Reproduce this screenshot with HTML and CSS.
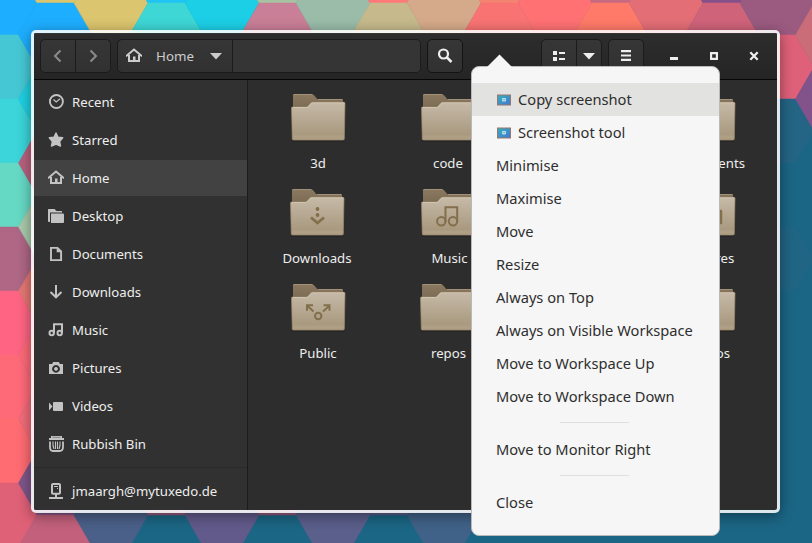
FILE: index.html
```html
<!DOCTYPE html>
<html lang="en">
<head>
<meta charset="utf-8">
<title>Home</title>
<link rel="stylesheet" href="styles.css">
</head>
<body>
<svg class="wallpaper" width="812" height="543" aria-hidden="true">
  <defs>
    <polygon id="hex" points="-18.5,0 18.5,0 37,32 18.5,64 -18.5,64 -37,32" fill="currentColor" stroke="currentColor" stroke-width=".5"/>
    <linearGradient id="front" x1="0" y1="0" x2="0" y2="1"><stop offset="0" stop-color="#c6baa8"/><stop offset=".85" stop-color="#a9997f"/><stop offset=".92" stop-color="#b0a085"/><stop offset="1" stop-color="#ab9b80"/></linearGradient>
    <linearGradient id="back" x1="0" y1="0" x2="0" y2="1"><stop offset="0" stop-color="#8a795f"/><stop offset="1" stop-color="#776650"/></linearGradient>
    <linearGradient id="screen" x1="0" y1="0" x2="1" y2="1"><stop offset="0" stop-color="#35aebb"/><stop offset="1" stop-color="#4678d0"/></linearGradient>
    <symbol id="folder" viewBox="0 0 56 50">
      <path d="M2 20V1.5Q2 .5 3 .5H21Q22.5 .5 23.3 1.6L26 4.8Q26.5 5.3 27.5 5.3H51Q52 5.3 52 6.3V20z" fill="url(#back)"/>
      <path d="M2.3 1.2Q2.5 .5 3 .5H21.5M27 5.5H51.5" fill="none" stroke="#a19177"/>
      <path d="M1 47.2H53" stroke="#191919" opacity=".55"/>
      <path d="M.5 14Q.5 13 1.500 13H15Q16.300 13 17.200 12L19.500 9.300Q20.400 8.300 22 8.300H53Q54 8.300 54 9.300L53.300 45Q53.200 46 52 46H2.500Q1.400 46 1.300 45z" fill="url(#front)" stroke="#9d8b6d" stroke-width=".7"/>
      <path d="M1.500 13.500H15.500Q16.800 13.500 17.600 12.500L19.800 9.800Q20.600 8.800 22 8.800H53" fill="none" stroke="#d6cbb9" stroke-width=".8"/>
    </symbol>
    <symbol id="home" viewBox="0 0 16 16"><path d="M0 8.200 8 1.600 16 8.200" fill="none" stroke="currentColor" stroke-width="2"/><path d="M3 7V13H13V7" fill="none" stroke="currentColor" stroke-width="2"/><path d="M7 8.500H9.500V14H7z" fill="currentColor"/></symbol>
    <symbol id="shot" viewBox="0 0 14 12"><path d="M0 .5H14V11.500H0z" fill="#96776f"/><path d="M1 1.500H13V10.500H1z" fill="url(#screen)"/><rect x="5" y="4" width="4" height="3.400" rx=".8" fill="#bcdfed"/><rect x="6.400" y="5" width="1.300" height="1.300" fill="#5aa5c8"/></symbol>
    <symbol id="notes" viewBox="0 0 16 16"><path d="M6 11V2.200H14V11" fill="none" stroke="currentColor" stroke-width="2"/><circle cx="3.700" cy="11" r="2.200" fill="none" stroke="currentColor" stroke-width="2"/><circle cx="11.700" cy="11" r="2.200" fill="none" stroke="currentColor" stroke-width="2"/></symbol>
  </defs>
  <rect width="812" height="543" fill="#1b6685"/>
  <use href="#hex" x="0" y="-29" color="#1eaeff"/><use href="#hex" x="0" y="35" color="#45c8d4"/><use href="#hex" x="0" y="99" color="#3bd5da"/><use href="#hex" x="0" y="163" color="#66d9c5"/><use href="#hex" x="0" y="227" color="#af6785"/><use href="#hex" x="0" y="291" color="#ff6583"/><use href="#hex" x="0" y="355" color="#ff6a79"/><use href="#hex" x="0" y="419" color="#ff6c72"/><use href="#hex" x="0" y="483" color="#df6178"/>
  <use href="#hex" x="55.500" y="-61" color="#dcc56f"/><use href="#hex" x="55.500" y="3" color="#1eaeff"/><use href="#hex" x="55.500" y="67" color="#1fd0e4"/><use href="#hex" x="55.500" y="131" color="#b8627e"/><use href="#hex" x="55.500" y="195" color="#aacbac"/><use href="#hex" x="55.500" y="259" color="#e57873"/><use href="#hex" x="55.500" y="323" color="#ff6a79"/><use href="#hex" x="55.500" y="387" color="#f36c79"/><use href="#hex" x="55.500" y="451" color="#7f5689"/><use href="#hex" x="55.500" y="515" color="#c3617c"/>
  <use href="#hex" x="111" y="-29" color="#dcc56f"/><use href="#hex" x="166.500" y="-61" color="#20c4f4"/><use href="#hex" x="166.500" y="3" color="#3ed7d5"/><use href="#hex" x="222" y="-29" color="#1ccfe6"/><use href="#hex" x="277.500" y="-61" color="#a7c3a1"/><use href="#hex" x="277.500" y="3" color="#c97f97"/><use href="#hex" x="333" y="-29" color="#9abca9"/><use href="#hex" x="388.500" y="-61" color="#ff7979"/><use href="#hex" x="388.500" y="3" color="#c6ba8c"/><use href="#hex" x="444" y="-29" color="#d5aa8a"/><use href="#hex" x="499.500" y="-61" color="#f58371"/><use href="#hex" x="499.500" y="3" color="#f97373"/><use href="#hex" x="555" y="-29" color="#ff7173"/><use href="#hex" x="610.500" y="-61" color="#c76a80"/><use href="#hex" x="610.500" y="3" color="#ff7a69"/><use href="#hex" x="666" y="-29" color="#e36e76"/><use href="#hex" x="721.500" y="-61" color="#865088"/><use href="#hex" x="721.500" y="3" color="#cf637a"/><use href="#hex" x="777" y="-29" color="#9b5b81"/><use href="#hex" x="777" y="35" color="#df6179"/><use href="#hex" x="777" y="99" color="#246585"/><use href="#hex" x="777" y="227" color="#216585"/><use href="#hex" x="832.500" y="3" color="#cb6d78"/><use href="#hex" x="832.500" y="67" color="#81538a"/>
  <use href="#hex" x="111" y="483" color="#4b6089"/><use href="#hex" x="166.500" y="451" color="#96597f"/><use href="#hex" x="222" y="483" color="#625a8b"/><use href="#hex" x="277.500" y="451" color="#96597f"/><use href="#hex" x="333" y="483" color="#5a5f8b"/><use href="#hex" x="388.500" y="451" color="#5a5f8b"/><use href="#hex" x="444" y="483" color="#416288"/>
</svg>

<div class="window">
  <header class="titlebar">
    <div class="group nav">
      <span><svg width="16" height="16"><path d="M10.500 2.500 5 8l5.500 5.500" fill="none" stroke="#8b8b8b" stroke-width="2"/></svg></span>
      <span><svg width="16" height="16"><path d="M5.500 2.500 11 8l-5.500 5.500" fill="none" stroke="#8b8b8b" stroke-width="2"/></svg></span>
    </div>
    <div class="group path">
      <span class="crumb"><svg width="16" height="16"><use href="#home"/></svg><b>Home</b><svg width="12" height="7"><path d="M0 0H12L6 6.500z" fill="currentColor"/></svg></span>
      <span class="rest"></span>
    </div>
    <div class="group search"><span><svg width="16" height="16"><circle cx="6.500" cy="6" r="4.500" fill="none" stroke="#eee" stroke-width="2.200"/><path d="M9.500 9 14.500 14" stroke="#eee" stroke-width="2.500"/></svg></span></div>
    <div class="group view">
      <span><svg width="12" height="12"><path d="M0 1h4v4H0zM0 7h4v4H0zM6 2h6v2H6zM6 8h6v2H6z" fill="#eee"/></svg></span>
      <span class="narrow"><svg width="12" height="7"><path d="M0 0H12L6 6.500z" fill="#eee"/></svg></span>
    </div>
    <div class="group burger"><span><svg width="10" height="12"><path d="M0 0h10v2.200H0zM0 4.400h10v2.200H0zM0 8.800h10V11H0z" fill="#eee"/></svg></span></div>
    <div class="controls">
      <svg width="16" height="16"><path d="M4 9h8v3H4z" fill="#eee"/></svg>
      <svg width="16" height="16"><path d="M5.100 5.100h5.800v5.800h-5.800z" fill="none" stroke="#eee" stroke-width="2.200"/></svg>
      <svg width="16" height="16"><path d="M4.300 4.300l7.400 7.400M11.700 4.300l-7.400 7.400" stroke="#eee" stroke-width="2.300"/></svg>
    </div>
  </header>
  <div class="body">
    <nav class="sidebar">
      <a><svg width="16" height="16"><circle cx="8.400" cy="7.500" r="6.500" fill="none" stroke="currentColor" stroke-width="1.900"/><path d="M5.500 5.500 8.200 8 12 4.800" fill="none" stroke="currentColor" stroke-width="1.200"/></svg>Recent</a>
      <a><svg width="16" height="16"><path d="M8 1 10 5.300 14.700 5.800 11.600 9.500 12.500 14 8 12 3.500 14 4.400 9.500 1.300 5.800 6 5.300z" fill="currentColor" stroke="currentColor" stroke-width="1.400" stroke-linejoin="round"/></svg>Starred</a>
      <a class="active"><svg width="16" height="16"><use href="#home"/></svg>Home</a>
      <a><svg width="16" height="16"><path d="M0 1.500Q0 1 .6 1H6.500L8.500 3H14V4.500H2V14H1Q0 14 0 13z" fill="currentColor"/><path d="M3 5.500H15Q16 5.500 16 6.500V14Q16 15 15 15H3z" fill="currentColor"/></svg>Desktop</a>
      <a><svg width="16" height="16"><path d="M3 1.900H9.500L13.100 5.500V14.100H3z" fill="none" stroke="currentColor" stroke-width="1.900"/><path d="M8.700 2V6.300H13z" fill="currentColor"/></svg>Documents</a>
      <a><svg width="16" height="16"><path d="M8 1V13M2.500 8 8 13.300 13.500 8" fill="none" stroke="currentColor" stroke-width="2"/></svg>Downloads</a>
      <a><svg width="16" height="16"><use href="#notes"/></svg>Music</a>
      <a><svg width="16" height="16"><path fill-rule="evenodd" d="M1 4H4L5.300 2H10.700L12 4H15V14H1zM8 5a3.900 3.900 0 1 0 .01 0zM8 7a1.900 1.900 0 1 1-.01 0z" fill="currentColor"/></svg>Pictures</a>
      <a><svg width="16" height="16"><path d="M6 4H14Q15 4 15 5V12Q15 13 14 13H6Q5 13 5 12V5Q5 4 6 4zM1 4.500 4.500 8.500 1 12.500z" fill="currentColor"/></svg>Videos</a>
      <a><svg width="16" height="16"><path d="M3 0H14V2H16V4H1V2H3z" fill="currentColor"/><path d="M4.500 1.300H12.500" stroke="#555" stroke-width=".6"/><path d="M2 5.500V11Q2 15 5 15H11.500Q15 15 15 11V5.500" fill="none" stroke="currentColor" stroke-width="1.800"/><path d="M5 5.500Q4.500 10 6 13M7.500 5.500V13M9.500 5.500V13M12 5.500Q12.500 10 11 13" fill="none" stroke="currentColor" stroke-width="1.100"/></svg>Rubbish Bin</a>
      <a class="account"><svg width="16" height="16"><rect x="4" y="1" width="8" height="9.700" rx="1" fill="none" stroke="currentColor" stroke-width="2"/><path d="M6 3.500h4M9 5.500h1" stroke="currentColor"/><path d="M7 11h2v3H7zM1 14h14v2H1z" fill="currentColor"/></svg>jmaargh@mytuxedo.de</a>
    </nav>
    <main class="files">
      <figure><svg class="folder" width="56" height="50"><use href="#folder"/></svg><figcaption>3d</figcaption></figure>
      <figure><svg class="folder" width="56" height="50"><use href="#folder"/></svg><figcaption>code</figcaption></figure>
      <figure></figure>
      <figure><svg class="folder" width="56" height="50"><use href="#folder"/></svg><figcaption class="shift">Documents</figcaption></figure>
      <figure class="nudge"><svg class="folder" width="56" height="50"><use href="#folder"/><g fill="#836f4c"><circle cx="27.500" cy="20" r="1.900"/><circle cx="27.500" cy="26" r="1.900"/></g><path d="M21 28.500 27.500 34 34 28.500" fill="none" stroke="#836f4c" stroke-width="2.800"/></svg><figcaption>Downloads</figcaption></figure>
      <figure><svg class="folder" width="56" height="50"><use href="#folder"/><g fill="none" stroke="#836f4c" stroke-width="2"><path d="M24.500 33V18.200H36.200V33"/><circle cx="20.300" cy="32.200" r="4.200"/><circle cx="32" cy="32.200" r="4.200"/></g></svg><figcaption class="shift">Music</figcaption></figure>
      <figure></figure>
      <figure><svg class="folder" width="56" height="50"><use href="#folder"/><path d="M21 34V22h19v12z" fill="none" stroke="#836f4c" stroke-width="2.500" stroke-linejoin="round"/></svg><figcaption class="shift">Pictures</figcaption></figure>
      <figure><svg class="folder" width="56" height="50"><use href="#folder"/><g fill="none" stroke="#836f4c" stroke-width="2"><circle cx="27.200" cy="32" r="3.200"/><path d="M22.500 27.500 16.500 22M32 27.500 38 22M16 26.800V21.300H22M32.500 21.300H38.500V26.800"/></g></svg><figcaption>Public</figcaption></figure>
      <figure class="nudge"><svg class="folder" width="56" height="50"><use href="#folder"/></svg><figcaption class="shift">repos</figcaption></figure>
      <figure></figure>
      <figure><svg class="folder" width="56" height="50"><use href="#folder"/></svg><figcaption class="shift">Videos</figcaption></figure>
    </main>
  </div>
</div>

<div class="menu">
  <svg class="arrow" width="26" height="13"><path d="M0 13 12.500 .5 25 13z" fill="#f6f6f6"/></svg>
  <ul>
    <li class="hover"><svg width="14" height="12"><use href="#shot"/></svg>Copy screenshot</li>
    <li><svg width="14" height="12"><use href="#shot"/></svg>Screenshot tool</li>
    <li>Minimise</li>
    <li>Maximise</li>
    <li>Move</li>
    <li>Resize</li>
    <li>Always on Top</li>
    <li>Always on Visible Workspace</li>
    <li>Move to Workspace Up</li>
    <li>Move to Workspace Down</li>
    <li class="sep"></li>
    <li>Move to Monitor Right</li>
    <li class="sep"></li>
    <li>Close</li>
  </ul>
</div>
</body>
</html>
```
FILE: styles.css
```css
* { box-sizing: border-box; }
html, body { margin: 0; height: 543px; overflow: hidden; }
body {
  position: relative;
  font-family: "Noto Sans", sans-serif;
  font-size: 13.2px;
  color: #eee;
  background: #1b6685;
}
svg { display: block; flex: none; }
.wallpaper { position: absolute; left: 0; top: 0; }

.window {
  position: absolute;
  left: 31px;
  top: 30px;
  width: 749px;
  height: 483px;
  border: 3px solid rgba(255, 255, 255, .86);
  border-radius: 5px;
  background: #2d2d2d;
  background-clip: padding-box;
  box-shadow: 0 3px 14px rgba(0, 0, 0, .42);
  display: flex;
  flex-direction: column;
  overflow: hidden;
}
.titlebar {
  height: 47px;
  flex: none;
  display: flex;
  padding: 6px 0 0 6px;
  background: linear-gradient(#2d2d2d, #252525);
  border-bottom: 1px solid #070707;
  box-shadow: inset 0 1px #363636;
}
.group {
  height: 34px;
  display: flex;
  border: 1px solid #1b1b1b;
  border-radius: 5px;
  background: linear-gradient(#363636, #313131);
  overflow: hidden;
}
.group span { flex: 1; display: flex; align-items: center; justify-content: center; }
.group span + span { border-left: 1px solid #1b1b1b; }
.nav { width: 71px; }
.path { width: 304px; margin-left: 6px; }
.path .crumb { flex: 0 0 114px; justify-content: flex-start; padding-left: 8px; color: #ccc; }
.path b { font-weight: 400; font-size: 13.33px; margin: 0 16px 0 14px; }
.path .rest { background: #353535; }
.search { width: 36px; margin-left: 6px; border-color: #141414; }
.view { width: 61px; margin-left: 78px; }
.view .narrow { flex: 0 0 25px; }
.burger { width: 36px; margin-left: 6px; }
.controls { display: flex; gap: 24px; margin: 9px 0 0 22px; }

.body { flex: 1; display: flex; min-height: 0; }
.sidebar {
  width: 214px;
  flex: none;
  border-right: 1px solid #1c1c1c;
  background: #313131;
  display: flex;
  flex-direction: column;
  gap: 2px;
  padding-top: 4px;
}
.sidebar a {
  height: 36px;
  flex: none;
  display: flex;
  align-items: center;
  gap: 8px;
  padding-left: 14px;
}
.sidebar svg { color: #c3c3c3; }
.sidebar .active { background: #424242; }
.sidebar .account { height: 46px; margin-top: 3px; border-top: 1px solid #292929; }

.files {
  flex: none;
  display: grid;
  grid-template-columns: repeat(4, 130px);
  grid-auto-rows: 95px;
  align-content: start;
  padding: 14px 0 0 5px;
}
figure { margin: 0; }
.folder { margin-left: 38px; }
.nudge .folder { margin-left: 37px; }
figcaption { margin-top: 10px; line-height: 18px; text-align: center; }
.nudge figcaption { margin-left: -2px; }
figcaption.shift { margin-left: 3px; }
.nudge figcaption.shift { margin-left: 1px; }

.menu {
  position: absolute;
  left: 471px;
  top: 66px;
  width: 249px;
  height: 470px;
  border: 1px solid #b9b9b9;
  border-radius: 8px;
  background: #f6f6f6;
  color: #2e2e2e;
  font-size: 14.67px;
}
.arrow { position: absolute; left: 15px; top: -13px; }
.menu ul { list-style: none; margin: 0; padding: 16px 0 0; }
.menu li { height: 33px; display: flex; align-items: center; gap: 7px; padding: 0 0 2px 24px; white-space: nowrap; }
.menu li svg { margin: 2px 0 0 1px; }
.menu .hover { background: #e2e2e0; }
.menu .sep { height: 1px; width: 69px; padding: 0; margin: 9px 0 10px 88px; background: #dfdfdf; }
```
